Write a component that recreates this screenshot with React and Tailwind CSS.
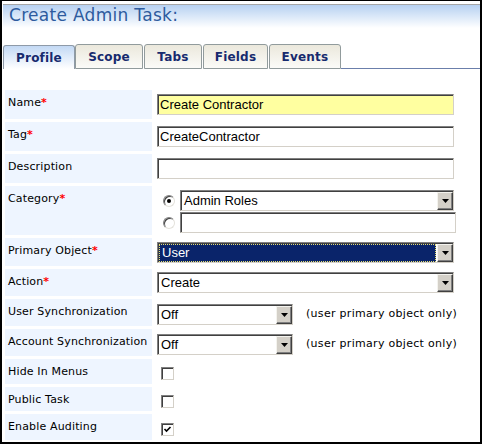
import React from "react";

const inset =
  "border border-t-[#808080] border-l-[#808080] border-b-[#d4d0c8] border-r-[#d4d0c8] shadow-[inset_1px_1px_0_#404040]";

function TextBox({ w, bg = "bg-white", text = "" }) {
  return (
    <div
      className={`${inset} ${bg} h-[21px] flex items-center pl-[2px] text-[13px] text-black font-['Liberation_Sans',sans-serif] ${w}`}
    >
      {text}
    </div>
  );
}

function Arrow() {
  return (
    <div className="w-[16px] h-full bg-[#d4d0c8] border border-t-[#f4f3ee] border-l-[#f4f3ee] border-b-[#404040] border-r-[#404040] shadow-[inset_-1px_-1px_0_#808080] flex items-center justify-center">
      <svg width="7" height="4" viewBox="0 0 7 4">
        <path d="M0 0H7L3.5 4Z" fill="#000" />
      </svg>
    </div>
  );
}

function Select({ w, text, focused = false }) {
  return (
    <div
      className={`${inset} bg-white h-[21px] flex items-stretch pt-[1px] pl-[1px] text-[13px] font-['Liberation_Sans',sans-serif] ${w}`}
    >
      {focused ? (
        <div className="flex-1 flex items-center bg-[#0a246a] text-white border border-dotted border-[#e8e070] pl-[2px] mr-[1px]">
          {text}
        </div>
      ) : (
        <div className="flex-1 flex items-center text-black pl-[2px]">{text}</div>
      )}
      <Arrow />
    </div>
  );
}

function Radio({ checked }) {
  return (
    <div className="w-[12px] h-[12px] rounded-full border border-t-[#808080] border-l-[#808080] border-b-[#e4e2dc] border-r-[#e4e2dc] bg-white flex items-center justify-center shadow-[inset_1px_1px_0_#404040]">
      {checked && <div className="w-[4px] h-[4px] rounded-full bg-black" />}
    </div>
  );
}

function Checkbox({ checked }) {
  return (
    <div className="w-[13px] h-[13px] border border-t-[#808080] border-l-[#808080] border-b-[#d4d0c8] border-r-[#d4d0c8] shadow-[inset_1px_1px_0_#404040] bg-white flex items-center justify-center">
      {checked && (
        <svg width="9" height="9" viewBox="0 0 9 9">
          <path d="M1.5 4L3.5 6L7.5 2" stroke="#000" strokeWidth="1.6" fill="none" />
        </svg>
      )}
    </div>
  );
}

function Label({ text, req, h }) {
  return (
    <div className={`bg-[#eef5ff] pl-[3px] pt-[6px] text-[11px] leading-[13px] tracking-[0.15px] text-black ${h}`}>
      {text}
      {req && <span className="text-[#ff0000] font-bold">*</span>}
    </div>
  );
}

const tabs = [
  { n: "Profile", w: "w-[72px]", active: true },
  { n: "Scope", w: "w-[68px]" },
  { n: "Tabs", w: "w-[58px]" },
  { n: "Fields", w: "w-[65px]" },
  { n: "Events", w: "w-[72px]" },
];

export default function App() {
  return (
    <div className="w-[482px] h-[444px] bg-white border-black border-t border-l-2 border-r-2 border-b-2 font-['DejaVu_Sans',sans-serif] overflow-hidden">
      {/* title */}
      <div className="mt-[3px] ml-[1px] h-[24px] border-t border-[#a6a6a6] bg-linear-to-b from-[#b7d1f1] to-white pl-[6px] text-[17px] leading-[20px] tracking-[0.3px] text-[#2d5b9e]">
        Create Admin Task:
      </div>

      {/* tabs */}
      <div className="mt-[16px] ml-[1px] flex items-end h-[25px]">
        {tabs.map((t, i) => (
          <div
            key={t.n}
            className={`${t.w} ${i > 1 ? "ml-[1px]" : ""} ${
              t.active
                ? "h-[24px] border-t border-l border-r border-[#8e9aa8] bg-linear-to-b from-[#c3d9f4] to-white"
                : "h-[25px] border border-[#919b9c] bg-linear-to-b from-[#ebe8dc] to-[#fbfbf8]"
            } rounded-t-[3px] flex items-center justify-center text-[12px] font-bold tracking-[0.2px] text-[#172a6e]`}
          >
            {t.n}
          </div>
        ))}
        <div className="flex-1 h-[1px] bg-[#6b7fab]" />
      </div>

      {/* form */}
      <div className="mt-[21px] ml-[3px] grid grid-cols-[147px_1fr] gap-x-[2px] gap-y-[3px]">
        <Label text="Name" req h="h-[29px]" />
        <div className="pt-[4px] pl-[3px]">
          <TextBox w="w-[297px]" bg="bg-[#ffffa0]" text="Create Contractor" />
        </div>

        <Label text="Tag" req h="h-[29px]" />
        <div className="pt-[4px] pl-[3px]">
          <TextBox w="w-[297px]" text="CreateContractor" />
        </div>

        <Label text="Description" h="h-[29px]" />
        <div className="pt-[4px] pl-[3px]">
          <TextBox w="w-[297px]" />
        </div>

        <Label text="Category" req h="h-[49px]" />
        <div className="pt-[4px] flex flex-col gap-[1px]">
          <div className="flex items-center">
            <div className="ml-[9px] mr-[5px]">
              <Radio checked />
            </div>
            <Select w="w-[274px]" text="Admin Roles" />
          </div>
          <div className="flex items-center">
            <div className="ml-[9px] mr-[5px]">
              <Radio />
            </div>
            <TextBox w="w-[276px]" />
          </div>
        </div>

        <Label text="Primary Object" req h="h-[28px]" />
        <div className="pt-[4px] pl-[3px]">
          <Select w="w-[297px]" text="User" focused />
        </div>

        <Label text="Action" req h="h-[27px]" />
        <div className="pt-[3px] pl-[3px]">
          <Select w="w-[297px]" text="Create" />
        </div>

        <Label text="User Synchronization" h="h-[27px]" />
        <div className="pt-[3px] pl-[3px] flex items-center">
          <Select w="w-[136px]" text="Off" />
          <span className="ml-[13px] text-[11px] tracking-[0.3px] text-black">(user primary object only)</span>
        </div>

        <Label text="Account Synchronization" h="h-[27px]" />
        <div className="pt-[3px] pl-[3px] flex items-center">
          <Select w="w-[136px]" text="Off" />
          <span className="ml-[13px] text-[11px] tracking-[0.3px] text-black">(user primary object only)</span>
        </div>

        <Label text="Hide In Menus" h="h-[25px]" />
        <div className="pt-[8px] pl-[7px]">
          <Checkbox />
        </div>

        <Label text="Public Task" h="h-[24px]" />
        <div className="pt-[8px] pl-[7px]">
          <Checkbox />
        </div>

        <Label text="Enable Auditing" h="h-[26px]" />
        <div className="pt-[9px] pl-[7px]">
          <Checkbox checked />
        </div>
      </div>
    </div>
  );
}
